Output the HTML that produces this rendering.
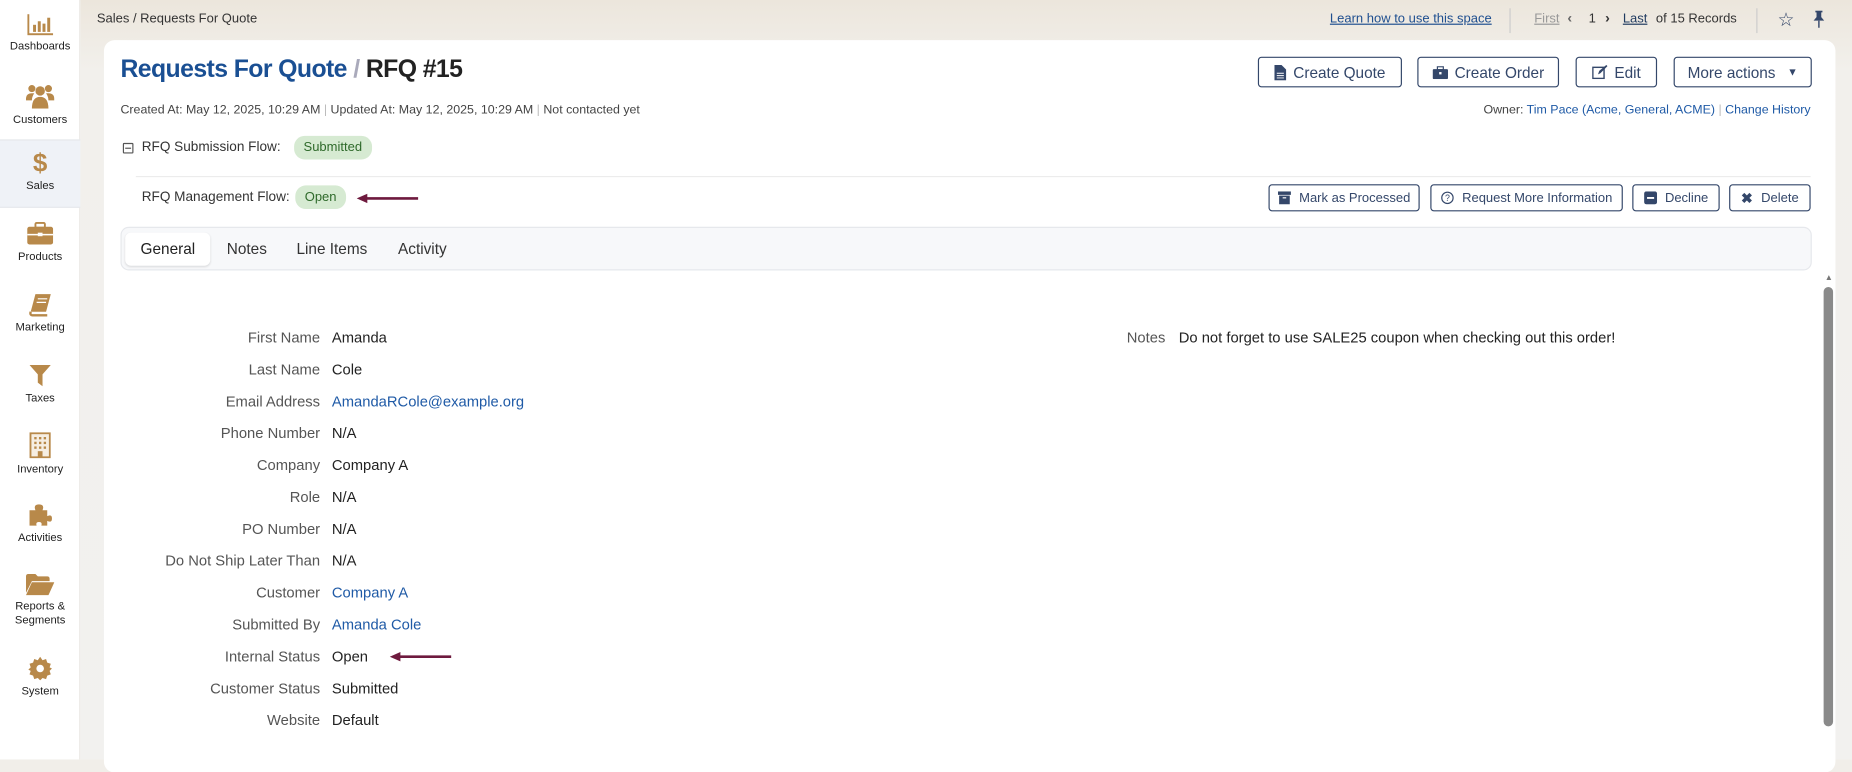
<!DOCTYPE html>
<html><head><meta charset="utf-8">
<style>
*{box-sizing:border-box;margin:0;padding:0}
html,body{width:1852px;height:760px;overflow:hidden;background:#f1eee9;font-family:"Liberation Sans",sans-serif;color:#2b2f36}
#w{position:absolute;left:0;top:0;width:1568px;height:643px;transform:scale(1.1811);transform-origin:0 0;background:linear-gradient(#ece6dc,#f2f0ec 60px,#f2f1ef)}
.a{position:absolute;white-space:nowrap}
#side{position:absolute;left:0;top:0;width:68px;height:643px;background:#fff;border-right:1px solid #eceae6}
.si{position:absolute;left:0;width:68px;text-align:center;font-size:9.5px;color:#222;line-height:12px}
.si svg{display:block;margin:0 auto 4px}
#card{position:absolute;left:88px;top:34px;width:1466px;height:620px;background:#fff;border-radius:9px}
.btn{position:absolute;border:1px solid #34476a;border-radius:3px;color:#34476a;font-size:13px;display:flex;align-items:center;justify-content:center;gap:6px;background:#fff}
.sb{position:absolute;border:1px solid #34476a;border-radius:3px;color:#34476a;font-size:11px;display:flex;align-items:center;justify-content:center;gap:7px;background:#fff;height:23px;top:156px}
.lab{position:absolute;right:1297px;font-size:12.5px;color:#555;text-align:right}
.val{position:absolute;left:281px;font-size:12.5px;color:#222}
.lnk{color:#1f5aa6}
.badge{position:absolute;background:#d6ead2;color:#2f6a2b;font-size:11px;border-radius:9px;height:20px;line-height:20px;padding:0 8px}
</style></head><body><div id="w">
<div id="side">
 <div class="si" style="top:12px"><svg width="22" height="18" viewBox="0 0 22 18"><path d="M1 0v17h21" stroke="#b8894a" stroke-width="1.6" fill="none"/><rect x="5" y="9" width="2.5" height="6" fill="#b8894a"/><rect x="9" y="6" width="2.5" height="9" fill="#b8894a"/><rect x="13" y="8" width="2.5" height="7" fill="#b8894a"/><rect x="17" y="3" width="2.5" height="12" fill="#b8894a"/></svg>Dashboards</div>
 <div class="si" style="top:70px"><svg width="24" height="22" viewBox="0 0 24 22"><circle cx="5" cy="5" r="3" fill="#b8894a"/><circle cx="19" cy="5" r="3" fill="#b8894a"/><circle cx="12" cy="7" r="4" fill="#b8894a"/><path d="M0 14q0-5 5-5h2q-2 3-2 6H0z M24 14q0-5-5-5h-2q2 3 2 6h5z M5 22q0-10 7-10t7 10z" fill="#b8894a"/></svg>Customers</div>
 <div style="position:absolute;left:0;top:118px;width:68px;height:58px;background:#eff2f7;border-top:1px solid #e6e8ec;border-bottom:1px solid #e6e8ec"></div>
 <div class="si" style="top:126px"><div style="font-size:22px;font-weight:bold;color:#b8894a;line-height:24px;margin-bottom:2px">$</div>Sales</div>
 <div class="si" style="top:188px"><svg width="22" height="20" viewBox="0 0 22 20"><rect x="7" y="0.8" width="8" height="4" rx="1" stroke="#b8894a" stroke-width="1.6" fill="none"/><rect x="0" y="4" width="22" height="15" rx="2" fill="#b8894a"/><rect x="0" y="10" width="22" height="1.3" fill="#fff"/><rect x="9" y="9" width="4" height="3" fill="#fff"/></svg>Products</div>
 <div class="si" style="top:248px"><svg width="20" height="20" viewBox="0 0 20 20"><path d="M6 1h13l-4 15H2z" fill="#b8894a"/><path d="M2 16q-1 3 2 3h12" stroke="#b8894a" stroke-width="2" fill="none"/><path d="M8 5h8M7 8h8" stroke="#fff" stroke-width="1"/></svg>Marketing</div>
 <div class="si" style="top:308px"><svg width="18" height="20" viewBox="0 0 18 20"><path d="M0 1h18l-7 8v10l-4-3V9z" fill="#b8894a"/></svg>Taxes</div>
 <div class="si" style="top:366px"><svg width="18" height="22" viewBox="0 0 18 22"><rect x="0.8" y="0.8" width="16.4" height="20.4" stroke="#b8894a" stroke-width="1.6" fill="#f6eee2"/><g fill="#b8894a"><rect x="4" y="4" width="2" height="2"/><rect x="8" y="4" width="2" height="2"/><rect x="12" y="4" width="2" height="2"/><rect x="4" y="8" width="2" height="2"/><rect x="8" y="8" width="2" height="2"/><rect x="12" y="8" width="2" height="2"/><rect x="4" y="12" width="2" height="2"/><rect x="8" y="12" width="2" height="2"/><rect x="12" y="12" width="2" height="2"/><rect x="7" y="16" width="4" height="5"/></g></svg>Inventory</div>
 <div class="si" style="top:426px"><svg width="22" height="20" viewBox="0 0 22 20"><path d="M2 6h5q-2-5 3-5t3 5h4v5q4-2 4 2t-4 2v4h-5q1-3-2-3t-2 3H2z" fill="#b8894a"/></svg>Activities</div>
 <div class="si" style="top:486px"><svg width="24" height="18" viewBox="0 0 24 18"><path d="M0 2q0-2 2-2h6l2 2h8q2 0 2 2v2H5L0 16z" fill="#b8894a"/><path d="M5 7h19l-5 11H0z" fill="#b8894a"/></svg>Reports &amp;<br>Segments</div>
 <div class="si" style="top:556px"><svg width="20" height="20" viewBox="0 0 20 20"><path d="M10 0l2 3 3-1 1 3 3 1-1 3 2 1-2 2 1 3-3 1-1 3-3-1-2 2-2-2-3 1-1-3-3-1 1-3-2-1 2-2-1-3 3-1 1-3 3 1z" fill="#b8894a"/><circle cx="10" cy="10" r="3.2" fill="#fff"/></svg>System</div>
</div>

<div class="a" style="left:82px;top:10px;font-size:11px;color:#333">Sales / Requests For Quote</div>
<div class="a" style="left:1126px;top:10px;font-size:11px;color:#1f4f8f;text-decoration:underline">Learn how to use this space</div>
<div class="a" style="left:1278px;top:7px;width:1px;height:21px;background:#ccc"></div>
<div class="a" style="left:1299px;top:10px;font-size:11px;color:#999;text-decoration:underline">First</div>
<div class="a" style="left:1327px;top:8px;font-size:12px;color:#666;font-weight:bold">‹</div>
<div class="a" style="left:1345px;top:10px;font-size:11px;color:#333">1</div>
<div class="a" style="left:1359px;top:8px;font-size:12px;color:#333;font-weight:bold">›</div>
<div class="a" style="left:1374px;top:10px;font-size:11px;color:#1f3a5f;text-decoration:underline">Last</div>
<div class="a" style="left:1402px;top:10px;font-size:11px;color:#333">of 15 Records</div>
<div class="a" style="left:1487px;top:7px;width:1px;height:21px;background:#ccc"></div>
<div class="a" style="left:1505px;top:7px;font-size:16px;color:#34476a">☆</div>
<svg class="a" style="left:1535px;top:9px" width="10" height="15" viewBox="0 0 10 15"><path d="M2 0h6v1.5H7v4l2.5 3h-9L3 5.5v-4H2z" fill="#34476a"/><rect x="4.4" y="8.5" width="1.2" height="6" fill="#34476a"/></svg>

<div id="card"></div>
<div class="a" style="left:102px;top:47px;font-size:21px;font-weight:bold;letter-spacing:-0.5px"><span style="color:#1a4f93">Requests For Quote</span> <span style="color:#aab">/</span> <span style="color:#222">RFQ #15</span></div>

<div class="btn" style="left:1065px;top:48px;width:122px;height:26px"><svg width="10" height="13" viewBox="0 0 10 13"><path d="M0 0h6l4 4v9H0z" fill="#34476a"/><path d="M2 7h6M2 9h6M2 11h6" stroke="#fff" stroke-width=".8"/></svg>Create Quote</div>
<div class="btn" style="left:1200px;top:48px;width:120px;height:26px"><svg width="13" height="11" viewBox="0 0 13 11"><rect x="4" y="0.5" width="5" height="2.5" stroke="#34476a" fill="none"/><rect x="0" y="2.5" width="13" height="8.5" rx="1" fill="#34476a"/><rect x="5.5" y="5" width="2" height="2" fill="#fff"/></svg>Create Order</div>
<div class="btn" style="left:1334px;top:48px;width:69px;height:26px"><svg width="13" height="12" viewBox="0 0 13 12"><rect x=".6" y="2" width="9.5" height="9.4" stroke="#34476a" stroke-width="1.2" fill="none"/><path d="M5 8l1-3 6-5 1 1-6 6z" fill="#34476a"/></svg>Edit</div>
<div class="btn" style="left:1417px;top:48px;width:117px;height:26px">More actions <span style="font-size:9px;margin-left:4px">▼</span></div>

<div class="a" style="left:102px;top:87px;font-size:10.5px;color:#444">Created At: May 12, 2025, 10:29 AM <span style="color:#bbb">|</span> Updated At: May 12, 2025, 10:29 AM <span style="color:#bbb">|</span> Not contacted yet</div>
<div class="a" style="right:35px;top:87px;font-size:10.5px;color:#444">Owner: <span class="lnk">Tim Pace (Acme, General, ACME)</span> <span style="color:#bbb">|</span> <span class="lnk">Change History</span></div>

<div class="a" style="left:104px;top:121px;width:9px;height:9px;border:1px solid #555;border-radius:1px"><div style="position:absolute;left:1px;top:3px;width:5px;height:1px;background:#555"></div></div>
<div class="a" style="left:120px;top:119px;font-size:11.5px;color:#333">RFQ Submission Flow:</div>
<div class="badge" style="left:249px;top:115px">Submitted</div>
<div class="a" style="left:115px;top:149px;width:1418px;height:1px;background:#ececec"></div>
<div class="a" style="left:120px;top:161px;font-size:11.5px;color:#333">RFQ Management Flow:</div>
<div class="badge" style="left:250px;top:157px">Open</div>
<svg class="a" style="left:302px;top:163px" width="54" height="10" viewBox="0 0 54 10"><path d="M52 5H8" stroke="#6e1a3e" stroke-width="2.2"/><path d="M0 5l9-4v8z" fill="#6e1a3e"/></svg>

<div class="sb" style="left:1074px;width:128px"><svg width="11" height="11" viewBox="0 0 11 11"><rect x="0" y="0" width="11" height="3" fill="#34476a"/><rect x="1" y="3.6" width="9" height="7.4" fill="#34476a"/><rect x="4" y="5" width="3" height="1" fill="#fff"/></svg>Mark as Processed</div>
<div class="sb" style="left:1211px;width:163px"><svg width="11" height="11" viewBox="0 0 11 11"><circle cx="5.5" cy="5.5" r="4.8" stroke="#34476a" fill="none"/><text x="5.5" y="8.3" font-size="7.5" text-anchor="middle" fill="#34476a" font-family="Liberation Sans">?</text></svg>Request More Information</div>
<div class="sb" style="left:1382px;width:74px"><svg width="11" height="11" viewBox="0 0 11 11"><rect width="11" height="11" rx="2" fill="#34476a"/><rect x="2.5" y="4.8" width="6" height="1.6" fill="#fff"/></svg>Decline</div>
<div class="sb" style="left:1464px;width:69px"><span style="font-weight:bold;font-size:12px">✖</span>Delete</div>

<div class="a" style="left:102px;top:192px;width:1432px;height:37px;background:#f7f8fa;border:1px solid #e6e8ec;border-radius:7px"></div>
<div class="a" style="left:106px;top:197px;width:72px;height:28px;background:#fff;border-radius:5px;box-shadow:0 1px 2px rgba(0,0,0,.12)"></div>
<div class="a" style="left:119px;top:203px;font-size:13px;color:#222">General</div>
<div class="a" style="left:192px;top:203px;font-size:13px;color:#333">Notes</div>
<div class="a" style="left:251px;top:203px;font-size:13px;color:#333">Line Items</div>
<div class="a" style="left:337px;top:203px;font-size:13px;color:#333">Activity</div>

<div class="a" style="left:1545px;top:232px;font-size:7px;color:#777">▲</div>
<div class="a" style="left:1544px;top:243px;width:8px;height:372px;background:#8a8a8a;border-radius:4px"></div>

<div class="lab" style="top:279px">First Name</div><div class="val" style="top:279px">Amanda</div>
<div class="lab" style="top:306px">Last Name</div><div class="val" style="top:306px">Cole</div>
<div class="lab" style="top:333px">Email Address</div><div class="val lnk" style="top:333px">AmandaRCole@example.org</div>
<div class="lab" style="top:360px">Phone Number</div><div class="val" style="top:360px">N/A</div>
<div class="lab" style="top:387px">Company</div><div class="val" style="top:387px">Company A</div>
<div class="lab" style="top:414px">Role</div><div class="val" style="top:414px">N/A</div>
<div class="lab" style="top:441px">PO Number</div><div class="val" style="top:441px">N/A</div>
<div class="lab" style="top:468px">Do Not Ship Later Than</div><div class="val" style="top:468px">N/A</div>
<div class="lab" style="top:495px">Customer</div><div class="val lnk" style="top:495px">Company A</div>
<div class="lab" style="top:522px">Submitted By</div><div class="val lnk" style="top:522px">Amanda Cole</div>
<div class="lab" style="top:549px">Internal Status</div><div class="val" style="top:549px">Open</div>
<svg class="a" style="left:330px;top:551px" width="54" height="10" viewBox="0 0 54 10"><path d="M52 5H8" stroke="#6e1a3e" stroke-width="2.2"/><path d="M0 5l9-4v8z" fill="#6e1a3e"/></svg>
<div class="lab" style="top:576px">Customer Status</div><div class="val" style="top:576px">Submitted</div>
<div class="lab" style="top:603px">Website</div><div class="val" style="top:603px">Default</div>

<div class="a" style="left:954px;top:279px;font-size:12.5px;color:#555">Notes</div>
<div class="a" style="left:998px;top:279px;font-size:12.5px;color:#222">Do not forget to use SALE25 coupon when checking out this order!</div>
</div></body></html>
